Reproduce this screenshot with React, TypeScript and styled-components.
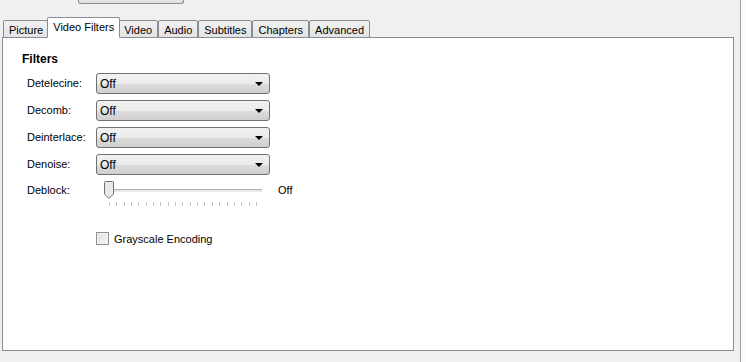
import React, {useState} from 'react';
import styled, {createGlobalStyle} from 'styled-components';

const GlobalStyle = createGlobalStyle`
  html, body {
    margin: 0;
    padding: 0;
    background: #f0f0f0;
  }
  body {
    font-family: "Liberation Sans", Arial, sans-serif;
    font-size: 11px;
    color: #000;
  }
`;

const Window = styled.div`
  width: 746px;
  height: 362px;
  display: flex;
  overflow: hidden;
  background: #f0f0f0;
`;

const Main = styled.div`
  width: 733px;
  display: flex;
  flex-direction: column;
  padding-left: 2px;
`;

const SideEdge = styled.div`
  margin-left: 6px;
  width: 5px;
  border-left: 1px solid #a0a0a0;
  background: #fbfbfb;
`;

const TopStrip = styled.div`
  height: 18px;
  padding-left: 76px;
`;

const TopButton = styled.div`
  width: 104px;
  height: 3px;
  border: 1px solid #8e8e8e;
  border-top: none;
  border-radius: 0 0 3px 3px;
  background: linear-gradient(#eaeaea, #dcdcdc);
`;

const TabBar = styled.div`
  display: flex;
  align-items: flex-end;
  height: 20px;
  padding-left: 1px;
  position: relative;
  z-index: 1;
  margin-bottom: -1px;
`;

const Tab = styled.div<{$active?: boolean}>`
  box-sizing: border-box;
  height: ${p => (p.$active ? 21 : 18)}px;
  padding: 0 5px;
  margin: 0 ${p => (p.$active ? -2 : 0)}px;
  display: flex;
  align-items: ${p => (p.$active ? 'flex-start' : 'center')};
  padding-top: ${p => (p.$active ? 3 : 1)}px;
  border: 1px solid #898c95;
  border-bottom: ${p => (p.$active ? '1px solid #fff' : '1px solid #898c95')};
  border-radius: 2px 2px 0 0;
  background: ${p => (p.$active ? '#fff' : 'linear-gradient(#f2f2f2, #e3e3e3)')};
  position: relative;
  z-index: ${p => (p.$active ? 2 : 1)};
  white-space: nowrap;
  & + & {
    border-left: ${p => (p.$active ? '1px solid #898c95' : 'none')};
  }
`;

const Panel = styled.div`
  box-sizing: border-box;
  height: 314px;
  background: #fff;
  border: 1px solid #898c95;
  padding: 14px 0 0 19px;
`;

const SectionTitle = styled.div`
  font-weight: bold;
  font-size: 12px;
  height: 15px;
  line-height: 15px;
  margin-bottom: 6px;
`;

const FormGrid = styled.div`
  display: grid;
  grid-template-columns: 69px auto;
  row-gap: 6px;
  padding-left: 5px;
  align-items: center;
`;

const Label = styled.div<{$top?: boolean}>`
  line-height: ${p => (p.$top ? 18 : 15)}px;
  align-self: ${p => (p.$top ? 'start' : 'center')};
`;

const Select = styled.div`
  box-sizing: border-box;
  width: 174px;
  height: 21px;
  border: 1px solid #707070;
  border-radius: 3px;
  background: linear-gradient(#f2f2f2 0%, #ebebeb 50%, #dddddd 51%, #cfcfcf 100%);
  display: flex;
  align-items: center;
  justify-content: space-between;
  padding: 0 6px 0 3px;
  font-size: 12px;
`;

const Arrow = styled.div`
  width: 0;
  height: 0;
  border-left: 4px solid transparent;
  border-right: 4px solid transparent;
  border-top: 4px solid #000;
`;

const SliderRow = styled.div`
  display: flex;
  align-items: flex-start;
  gap: 16px;
`;

const SliderBox = styled.div`
  width: 158px;
  display: flex;
  flex-direction: column;
  padding-left: 8px;
`;

const Track = styled.div`
  position: relative;
  height: 18px;
  display: flex;
  align-items: center;
  &::before {
    content: '';
    flex: 1;
    height: 2px;
    background: #e7eaea;
    border-top: 1px solid #b0b0b0;
  }
`;

const Thumb = styled.svg`
  position: absolute;
  left: 0;
  top: 0;
`;

const Ticks = styled.div`
  display: flex;
  justify-content: space-between;
  padding: 3px 5px 0 5px;
  height: 4px;
`;

const Tick = styled.span`
  width: 1px;
  height: 4px;
  background: #c4c4c4;
`;

const SliderValue = styled.div`
  line-height: 18px;
`;

const CheckRow = styled.label`
  display: flex;
  align-items: center;
  gap: 5px;
  margin-top: 26px;
  margin-left: 74px;
  cursor: default;
`;

const CheckBox = styled.span`
  box-sizing: border-box;
  width: 13px;
  height: 13px;
  border: 1px solid #8f8f8f;
  background: linear-gradient(135deg, #dcdcdc, #f8f8f8);
  box-shadow: inset 0 0 0 1px #f4f4f4;
`;

const tabs = ['Picture', 'Video Filters', 'Video', 'Audio', 'Subtitles', 'Chapters', 'Advanced'];
const filters = ['Detelecine:', 'Decomb:', 'Deinterlace:', 'Denoise:'];

export default function App() {
    const [active, setActive] = useState('Video Filters');
    return (
        <Window>
            <GlobalStyle/>
            <Main>
                <TopStrip>
                    <TopButton/>
                </TopStrip>
                <TabBar>
                    {tabs.map(t => (
                        <Tab key={t} $active={t === active} onClick={() => setActive(t)}>
                            {t}
                        </Tab>
                    ))}
                </TabBar>
                <Panel>
                    <SectionTitle>Filters</SectionTitle>
                    <FormGrid>
                        {filters.map(f => (
                            <React.Fragment key={f}>
                                <Label>{f}</Label>
                                <Select>
                                    <span>Off</span>
                                    <Arrow/>
                                </Select>
                            </React.Fragment>
                        ))}
                        <Label $top>Deblock:</Label>
                        <SliderRow>
                            <SliderBox>
                                <Track>
                                    <Thumb width="10" height="18" viewBox="0 0 10 18">
                                        <path d="M0.5 1.5 Q0.5 0.5 1.5 0.5 H8.5 Q9.5 0.5 9.5 1.5 V13 L5 17.5 L0.5 13 Z"
                                              fill="#e9e9e9" stroke="#707070"/>
                                    </Thumb>
                                </Track>
                                <Ticks>
                                    {Array.from({length: 21}).map((_, i) => <Tick key={i}/>)}
                                </Ticks>
                            </SliderBox>
                            <SliderValue>Off</SliderValue>
                        </SliderRow>
                    </FormGrid>
                    <CheckRow>
                        <CheckBox/>
                        <span>Grayscale Encoding</span>
                    </CheckRow>
                </Panel>
            </Main>
            <SideEdge/>
        </Window>
    );
}
